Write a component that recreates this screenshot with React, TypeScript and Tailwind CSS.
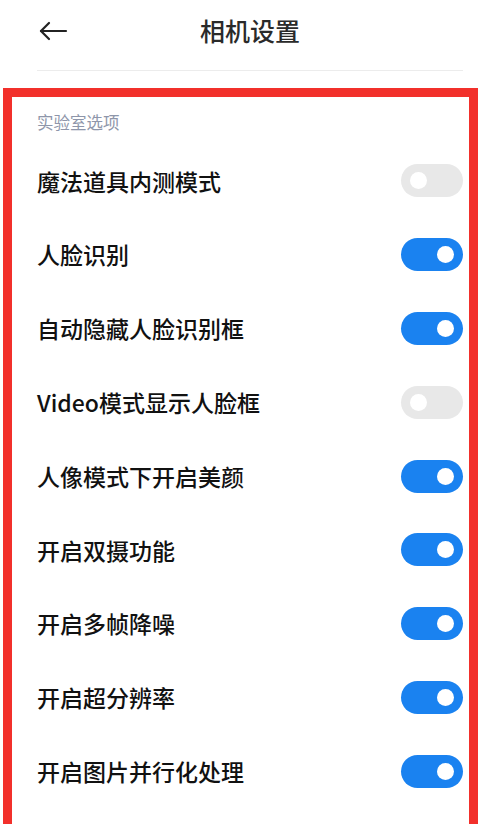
import React from "react";

const rows: { label: string; on: boolean }[] = [
  { label: "魔法道具内测模式", on: false },
  { label: "人脸识别", on: true },
  { label: "自动隐藏人脸识别框", on: true },
  { label: "Video模式显示人脸框", on: false },
  { label: "人像模式下开启美颜", on: true },
  { label: "开启双摄功能", on: true },
  { label: "开启多帧降噪", on: true },
  { label: "开启超分辨率", on: true },
  { label: "开启图片并行化处理", on: true },
];

function Toggle({ on }: { on: boolean }) {
  return (
    <div
      className={
        on
          ? "flex h-[33px] w-[62px] items-center justify-end rounded-full bg-[#1a82f0] pr-[9px]"
          : "flex h-[33px] w-[62px] items-center justify-start rounded-full bg-[#e8e8e8] pl-[9px]"
      }
    >
      <div className="h-[17px] w-[17px] rounded-full bg-white" />
    </div>
  );
}

export default function App() {
  return (
    <div
      className="h-[824px] w-[500px] overflow-hidden bg-white"
      style={{ fontFamily: '"Noto Sans CJK SC", "Noto Sans", sans-serif' }}
    >
      <div className="relative flex h-[61px] items-center justify-center">
        <svg
          className="absolute left-[39px] top-[21px]"
          width="30"
          height="20"
          viewBox="0 0 30 20"
          fill="none"
          stroke="#222"
          strokeWidth="2.2"
          strokeLinecap="round"
          strokeLinejoin="round"
        >
          <path d="M2 10H27" />
          <path d="M10 2L2 10L10 18" />
        </svg>
        <span className="text-[25px] font-medium leading-none text-[#2a2a2a]">相机设置</span>
      </div>
      <div className="mx-[37px] mt-[9px] h-px bg-[#ececec]" />
      <div className="ml-[3px] mt-[17px] h-[800px] w-[475px] border-[9px] border-b-0 border-[#f2302b] pl-[25px] pr-[6px]">
        <div className="pt-[15px] pb-[12px] text-[16.5px] leading-[20px] text-[#8e96aa]">实验室选项</div>
        {rows.map((r) => (
          <div key={r.label} className="flex h-[73.8px] items-center justify-between">
            <span className="text-[23px] font-medium text-[#111]">{r.label}</span>
            <Toggle on={r.on} />
          </div>
        ))}
      </div>
    </div>
  );
}
